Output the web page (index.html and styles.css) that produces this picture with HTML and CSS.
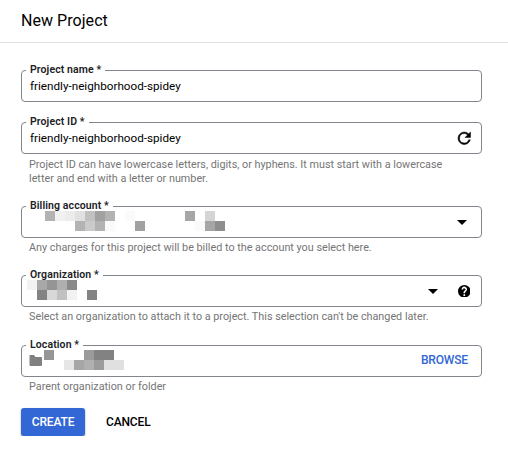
FILE: index.html
```html
<!DOCTYPE html>
<html lang="en">
<head>
<meta charset="utf-8">
<title>New Project</title>
<link rel="stylesheet" href="styles.css">
</head>
<body>
<header class="header"><h1 class="title">New Project</h1></header>
<main class="form">
  <section class="group group-name">
    <div class="field">
      <span class="label">Project name *</span>
      <span class="value">friendly-neighborhood-spidey</span>
    </div>
  </section>
  <section class="group group-id">
    <div class="field">
      <span class="label">Project ID *</span>
      <span class="value">friendly-neighborhood-spidey</span>
      <svg class="icon-refresh" viewBox="4 4 16 16"><path stroke="#000" stroke-width=".6" d="M17.65 6.35A7.96 7.96 0 0 0 12 4a8 8 0 1 0 7.73 10h-2.080A6 6 0 1 1 12 6c1.660 0 3.140.69 4.220 1.780L13 11h7V4z"/></svg>
    </div>
    <p class="hint">Project ID can have lowercase letters, digits, or hyphens. It must start with a lowercase<br>letter and end with a letter or number.</p>
  </section>
  <section class="group group-billing">
    <div class="field">
      <span class="label">Billing account *</span>
      <svg class="mosaic" viewBox="0 0 461 32" shape-rendering="crispEdges">
        <path fill="#b3b3b3" d="M24 5h10v10h-10zM84 5h10v10h-10zM54 15h10v10h-10zM74 15h10v10h-10z"/>
        <path fill="#f1f1f1" d="M34 5h10v10h-10z"/>
        <path fill="#ececec" d="M44 5h10v10h-10z"/>
        <path fill="#e1e1e1" d="M54 5h10v10h-10z"/>
        <path fill="#c1c1c1" d="M64 5h10v10h-10z"/>
        <path fill="#a1a1a1" d="M74 5h10v10h-10zM114 15h10v10h-10z"/>
        <path fill="#fafafa" d="M104 5h10v10h-10zM84 15h10v10h-10zM174 15h10v10h-10z"/>
        <path fill="#cbcbcb" d="M64 15h10v10h-10z"/>
        <path fill="#a6a6a6" d="M164 5h10v10h-10zM184 15h10v10h-10z"/>
        <path fill="#d5d5d5" d="M184 5h10v10h-10z"/>
        <path fill="#8e8e8e" d="M194 15h10v10h-10z"/>
      </svg>
      <svg class="icon-arrow" viewBox="0 0 10 5"><path d="M0 0h10L5 5z"/></svg>
    </div>
    <p class="hint">Any charges for this project will be billed to the account you select here.</p>
  </section>
  <section class="group group-org">
    <div class="field">
      <span class="label">Organization *</span>
      <svg class="mosaic" viewBox="0 0 461 32" shape-rendering="crispEdges">
        <path fill="#f2f2f2" d="M6 5h10v10h-10zM46 15h10v10h-10z"/>
        <path fill="#a8a8a8" d="M16 5h10v10h-10z"/>
        <path fill="#959595" d="M26 5h10v10h-10z"/>
        <path fill="#afafaf" d="M36 5h10v10h-10z"/>
        <path fill="#8a8a8a" d="M46 5h10v10h-10z"/>
        <path fill="#838383" d="M16 15h10v10h-10zM66 15h10v10h-10z"/>
        <path fill="#d8d8d8" d="M26 15h10v10h-10z"/>
        <path fill="#c1c1c1" d="M36 15h10v10h-10z"/>
      </svg>
      <svg class="icon-arrow icon-arrow-inner" viewBox="0 0 10 5"><path d="M0 0h10L5 5z"/></svg>
      <svg class="icon-help" viewBox="2 2 20 20"><path fill-rule="evenodd" d="M12 2a10 10 0 1 0 0 20 10 10 0 0 0 0-20zm1.300 17.300h-2.600v-2.600h2.600zM15.300 11.500l-.9.920C13.650 13.150 13.300 13.600 13.300 15.200h-2.600v-.7c0-1.100.45-2.100 1.170-2.830l1.240-1.260A1.700 1.700 0 1 0 10.300 9.300H7.700a4.300 4.300 0 1 1 7.600 2.200z"/></svg>
    </div>
    <p class="hint">Select an organization to attach it to a project. This selection can't be changed later.</p>
  </section>
  <section class="group group-location">
    <div class="field">
      <span class="label">Location *</span>
      <svg class="mosaic" viewBox="0 0 461 32">
        <path fill="#808080" d="M9 10h4l1.500 2H20a1 1 0 0 1 1 1v7a1 1 0 0 1-1 1H9.500a1 1 0 0 1-1-1v-9.500z"/>
        <path fill="#969696" d="M23 5h10v10h-10z"/>
        <path fill="#9b9b9b" d="M63 5h10v10h-10zM73 15h10v10h-10z"/>
        <path fill="#828282" d="M73 5h20v10h-20z"/>
        <path fill="#e6e6e6" d="M43 15h10v10h-10z"/>
        <path fill="#a6a6a6" d="M53 15h10v10h-10z"/>
        <path fill="#b0b0b0" d="M63 15h10v10h-10z"/>
        <path fill="#e0e0e0" d="M83 15h20v10h-20z"/>
      </svg>
      <span class="browse">BROWSE</span>
    </div>
    <p class="hint">Parent organization or folder</p>
  </section>
  <div class="actions">
    <button class="btn btn-primary">CREATE</button>
    <button class="btn btn-text">CANCEL</button>
  </div>
</main>
</body>
</html>
```
FILE: styles.css
```css
* { box-sizing: border-box; }
body {
  margin: 0;
  background: #fff;
  color: #000;
  font-family: Roboto, "Liberation Sans", sans-serif;
  font-size: 12px;
}
.header {
  height: 43px;
  padding-left: 21px;
  border-bottom: 1px solid #e0e0e0;
}
.title {
  margin: 0;
  font-size: 16px;
  font-weight: 400;
  line-height: 41px;
  letter-spacing: 0.05px;
}
.form {
  width: 482px;
  padding: 27px 0 0 21px;
}
.group-name { height: 52px; }
.group-id { height: 84px; }
.group-id .hint { margin-top: 4px; }
.group-billing { height: 69px; }
.group-org { height: 70px; }
.group-location { height: 63px; }
.field {
  position: relative;
  display: flex;
  align-items: center;
  height: 32px;
  border: 1px solid #80868b;
  border-radius: 4px;
}
.label {
  position: absolute;
  top: -8px;
  left: 4px;
  padding: 0 4px;
  background: #fff;
  color: #202124;
  font-size: 10.5px;
  font-weight: 600;
  line-height: 14px;
  letter-spacing: 0.1px;
  white-space: nowrap;
}
.value {
  padding-left: 8px;
  font-size: 11.7px;
}
.mosaic {
  position: absolute;
  top: -1px;
  left: -1px;
  width: 461px;
  height: 32px;
}
.icon-refresh {
  width: 12.5px;
  height: 12.5px;
  margin: 0 10.5px 0 auto;
  overflow: visible;
}
.icon-arrow {
  width: 10px;
  height: 5px;
  margin: 0 14px 0 auto;
}
.icon-arrow-inner { margin-right: 15px; }
.icon-help {
  width: 12.6px;
  height: 12.6px;
  margin: 0 10.7px 0 4.7px;
}
.browse {
  margin: -2px 13px 0 auto;
  color: #3367d6;
  font-size: 12px;
  font-weight: 500;
  letter-spacing: -0.15px;
}
.hint {
  margin: 3px 0 0 8px;
  color: #757575;
  font-size: 10.8px;
  line-height: 14px;
  white-space: nowrap;
}
.actions {
  display: flex;
  gap: 11px;
}
.btn {
  height: 28px;
  padding: 0 10px;
  border: 0;
  border-radius: 3px;
  font: 500 12px Roboto, "Liberation Sans", sans-serif;
  letter-spacing: -0.15px;
}
.btn-primary {
  width: 64px;
  background: #3367d6;
  color: #fff;
  box-shadow: 0 1px 2px rgba(0, 0, 0, 0.4);
}
.btn-text {
  background: none;
  color: #000;
}
```
